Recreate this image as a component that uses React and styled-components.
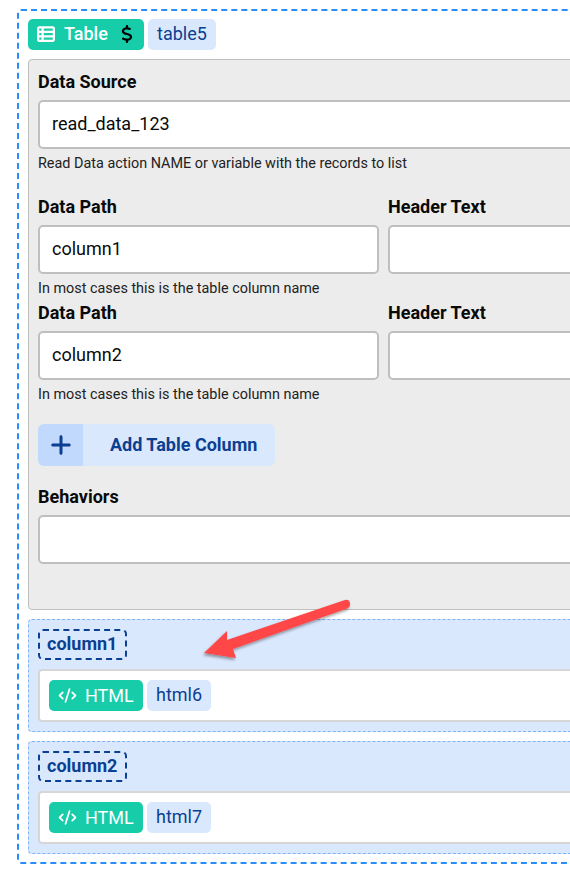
import React from 'react'
import styled, { createGlobalStyle } from 'styled-components'
import { FaTableList, FaDollarSign, FaPlus } from 'react-icons/fa6'
import { CodeXml } from 'lucide-react'

const GlobalStyle = createGlobalStyle`
  html, body {
    margin: 0;
    padding: 0;
    background: #fff;
    overflow: hidden;
  }
  * {
    box-sizing: border-box;
  }
`

const columns = [
  { path: 'column1', html: 'html6' },
  { path: 'column2', html: 'html7' },
]

export default function App() {
  return (
    <Page>
      <GlobalStyle />
      <Outer>
        <TagRow>
          <TypeTag>
            <FaTableList size={18} />
            <span>Table</span>
            <Dollar><FaDollarSign size={18} /></Dollar>
          </TypeTag>
          <NameTag>table5</NameTag>
        </TagRow>
        <Panel>
          <Label>Data Source</Label>
          <Input>read_data_123</Input>
          <Help>Read Data action NAME or variable with the records to list</Help>
          <ColumnRows>
            {columns.map(c => (
              <ColumnRow key={c.path}>
                <Field>
                  <Label>Data Path</Label>
                  <Input>{c.path}</Input>
                  <Help>In most cases this is the table column name</Help>
                </Field>
                <Field>
                  <Label>Header Text</Label>
                  <Input />
                </Field>
              </ColumnRow>
            ))}
          </ColumnRows>
          <AddButton>
            <AddIcon><FaPlus size={24} /></AddIcon>
            <AddText>Add Table Column</AddText>
          </AddButton>
          <Label>Behaviors</Label>
          <Input />
        </Panel>
        {columns.map(c => (
          <ColumnBox key={c.path}>
            <ColumnTag>{c.path}</ColumnTag>
            <Inner>
              <HtmlTag>
                <CodeXml size={19} strokeWidth={2.25} />
                <span>HTML</span>
              </HtmlTag>
              <NameTag>{c.html}</NameTag>
            </Inner>
          </ColumnBox>
        ))}
      </Outer>
      <Arrow width="160" height="80" viewBox="0 0 160 80">
        <defs>
          <filter id="arrow-shadow" x="-20%" y="-30%" width="140%" height="170%">
            <feDropShadow dx="-1" dy="2" stdDeviation="1.5" floodColor="#000" floodOpacity="0.4" />
          </filter>
        </defs>
        <path
          filter="url(#arrow-shadow)"
          fill="#ff4647"
          d="M4 60 L27 38 L27 47 L145 7 Q149 6 150 10 Q150.500 14 147 15.500 L33 56 L36 65 Z"
        />
      </Arrow>
    </Page>
  )
}

const Page = styled.div`
  position: relative;
  width: 570px;
  height: 874px;
  overflow: hidden;
  padding: 9px 0 0 17px;
  font-family: Roboto, "Liberation Sans", sans-serif;
  color: #0a0a0a;
`

const Outer = styled.div`
  width: 734px;
  height: 855px;
  padding: 8px 9px 0;
  border: 2px dashed #2a8efa;
  border-radius: 4px;
`

const TagRow = styled.div`
  display: flex;
  gap: 4px;
  margin-bottom: 9px;
`

const TypeTag = styled.div`
  display: flex;
  align-items: center;
  gap: 9px;
  width: 116px;
  height: 31px;
  padding: 0 0 2px 9px;
  border-radius: 5px;
  background: #17cca9;
  color: #fff;
  font-size: 18px;
  font-weight: 500;
`

const Dollar = styled.span`
  display: flex;
  margin-left: 1px;
  color: #000;
`

const NameTag = styled.div`
  display: flex;
  align-items: center;
  height: 31px;
  padding: 0 9px 2px;
  border-radius: 5px;
  background: #dae8fd;
  color: #0b3f91;
  font-size: 18px;
`

const Panel = styled.div`
  width: 712px;
  height: 551px;
  margin-bottom: 9px;
  padding: 12px 9px 0;
  border: 1px solid #bfbfbf;
  border-radius: 4px;
  background: #ececec;
`

const Label = styled.div`
  height: 20px;
  margin-bottom: 8px;
  font-size: 18px;
  line-height: 20px;
  font-weight: 700;
`

const Input = styled.div`
  display: flex;
  align-items: center;
  height: 49px;
  padding: 0 12px 2px;
  border: 2px solid #bfbfbf;
  border-radius: 5px;
  background: #fff;
  font-size: 18px;
`

const Help = styled.div`
  margin-top: 6px;
  height: 18px;
  font-size: 14.4px;
  line-height: 18px;
  color: #222;
`

const ColumnRows = styled.div`
  display: flex;
  flex-direction: column;
  gap: 5px;
  margin-top: 24px;
`

const ColumnRow = styled.div`
  display: grid;
  grid-template-columns: 341px 1fr;
  gap: 9px;
`

const Field = styled.div`
  min-width: 0;
`

const AddButton = styled.div`
  display: flex;
  width: 237px;
  height: 42px;
  margin: 20px 0 21px;
  border-radius: 6px;
  overflow: hidden;
  background: #dae8fd;
  color: #0b3f91;
`

const AddIcon = styled.div`
  display: flex;
  align-items: center;
  justify-content: center;
  width: 45px;
  background: #c0d9fc;
`

const AddText = styled.div`
  display: flex;
  align-items: center;
  padding: 0 0 2px 27px;
  font-size: 18px;
  font-weight: 700;
`

const ColumnBox = styled.div`
  width: 712px;
  height: 113px;
  margin-bottom: 9px;
  padding: 9px 9px 0;
  border: 1px dashed #7fb2f8;
  border-radius: 4px;
  background: #dae8fd;
`

const ColumnTag = styled.div`
  display: flex;
  align-items: center;
  width: 89px;
  height: 31px;
  margin-bottom: 9px;
  padding: 0 0 2px 7px;
  border: 2px dashed #0b3f91;
  border-radius: 5px;
  color: #0b3f91;
  font-size: 18px;
  font-weight: 700;
`

const Inner = styled.div`
  display: flex;
  align-items: center;
  gap: 4px;
  height: 53px;
  padding-left: 9px;
  border: 2px solid #d6d6d6;
  border-radius: 4px;
  background: #fff;
`

const HtmlTag = styled.div`
  display: flex;
  align-items: center;
  gap: 8px;
  width: 94px;
  height: 31px;
  padding: 0 0 1px 9px;
  border-radius: 5px;
  background: #17cca9;
  color: #fff;
  font-size: 18px;
`

const Arrow = styled.svg`
  position: absolute;
  left: 200px;
  top: 593px;
`
